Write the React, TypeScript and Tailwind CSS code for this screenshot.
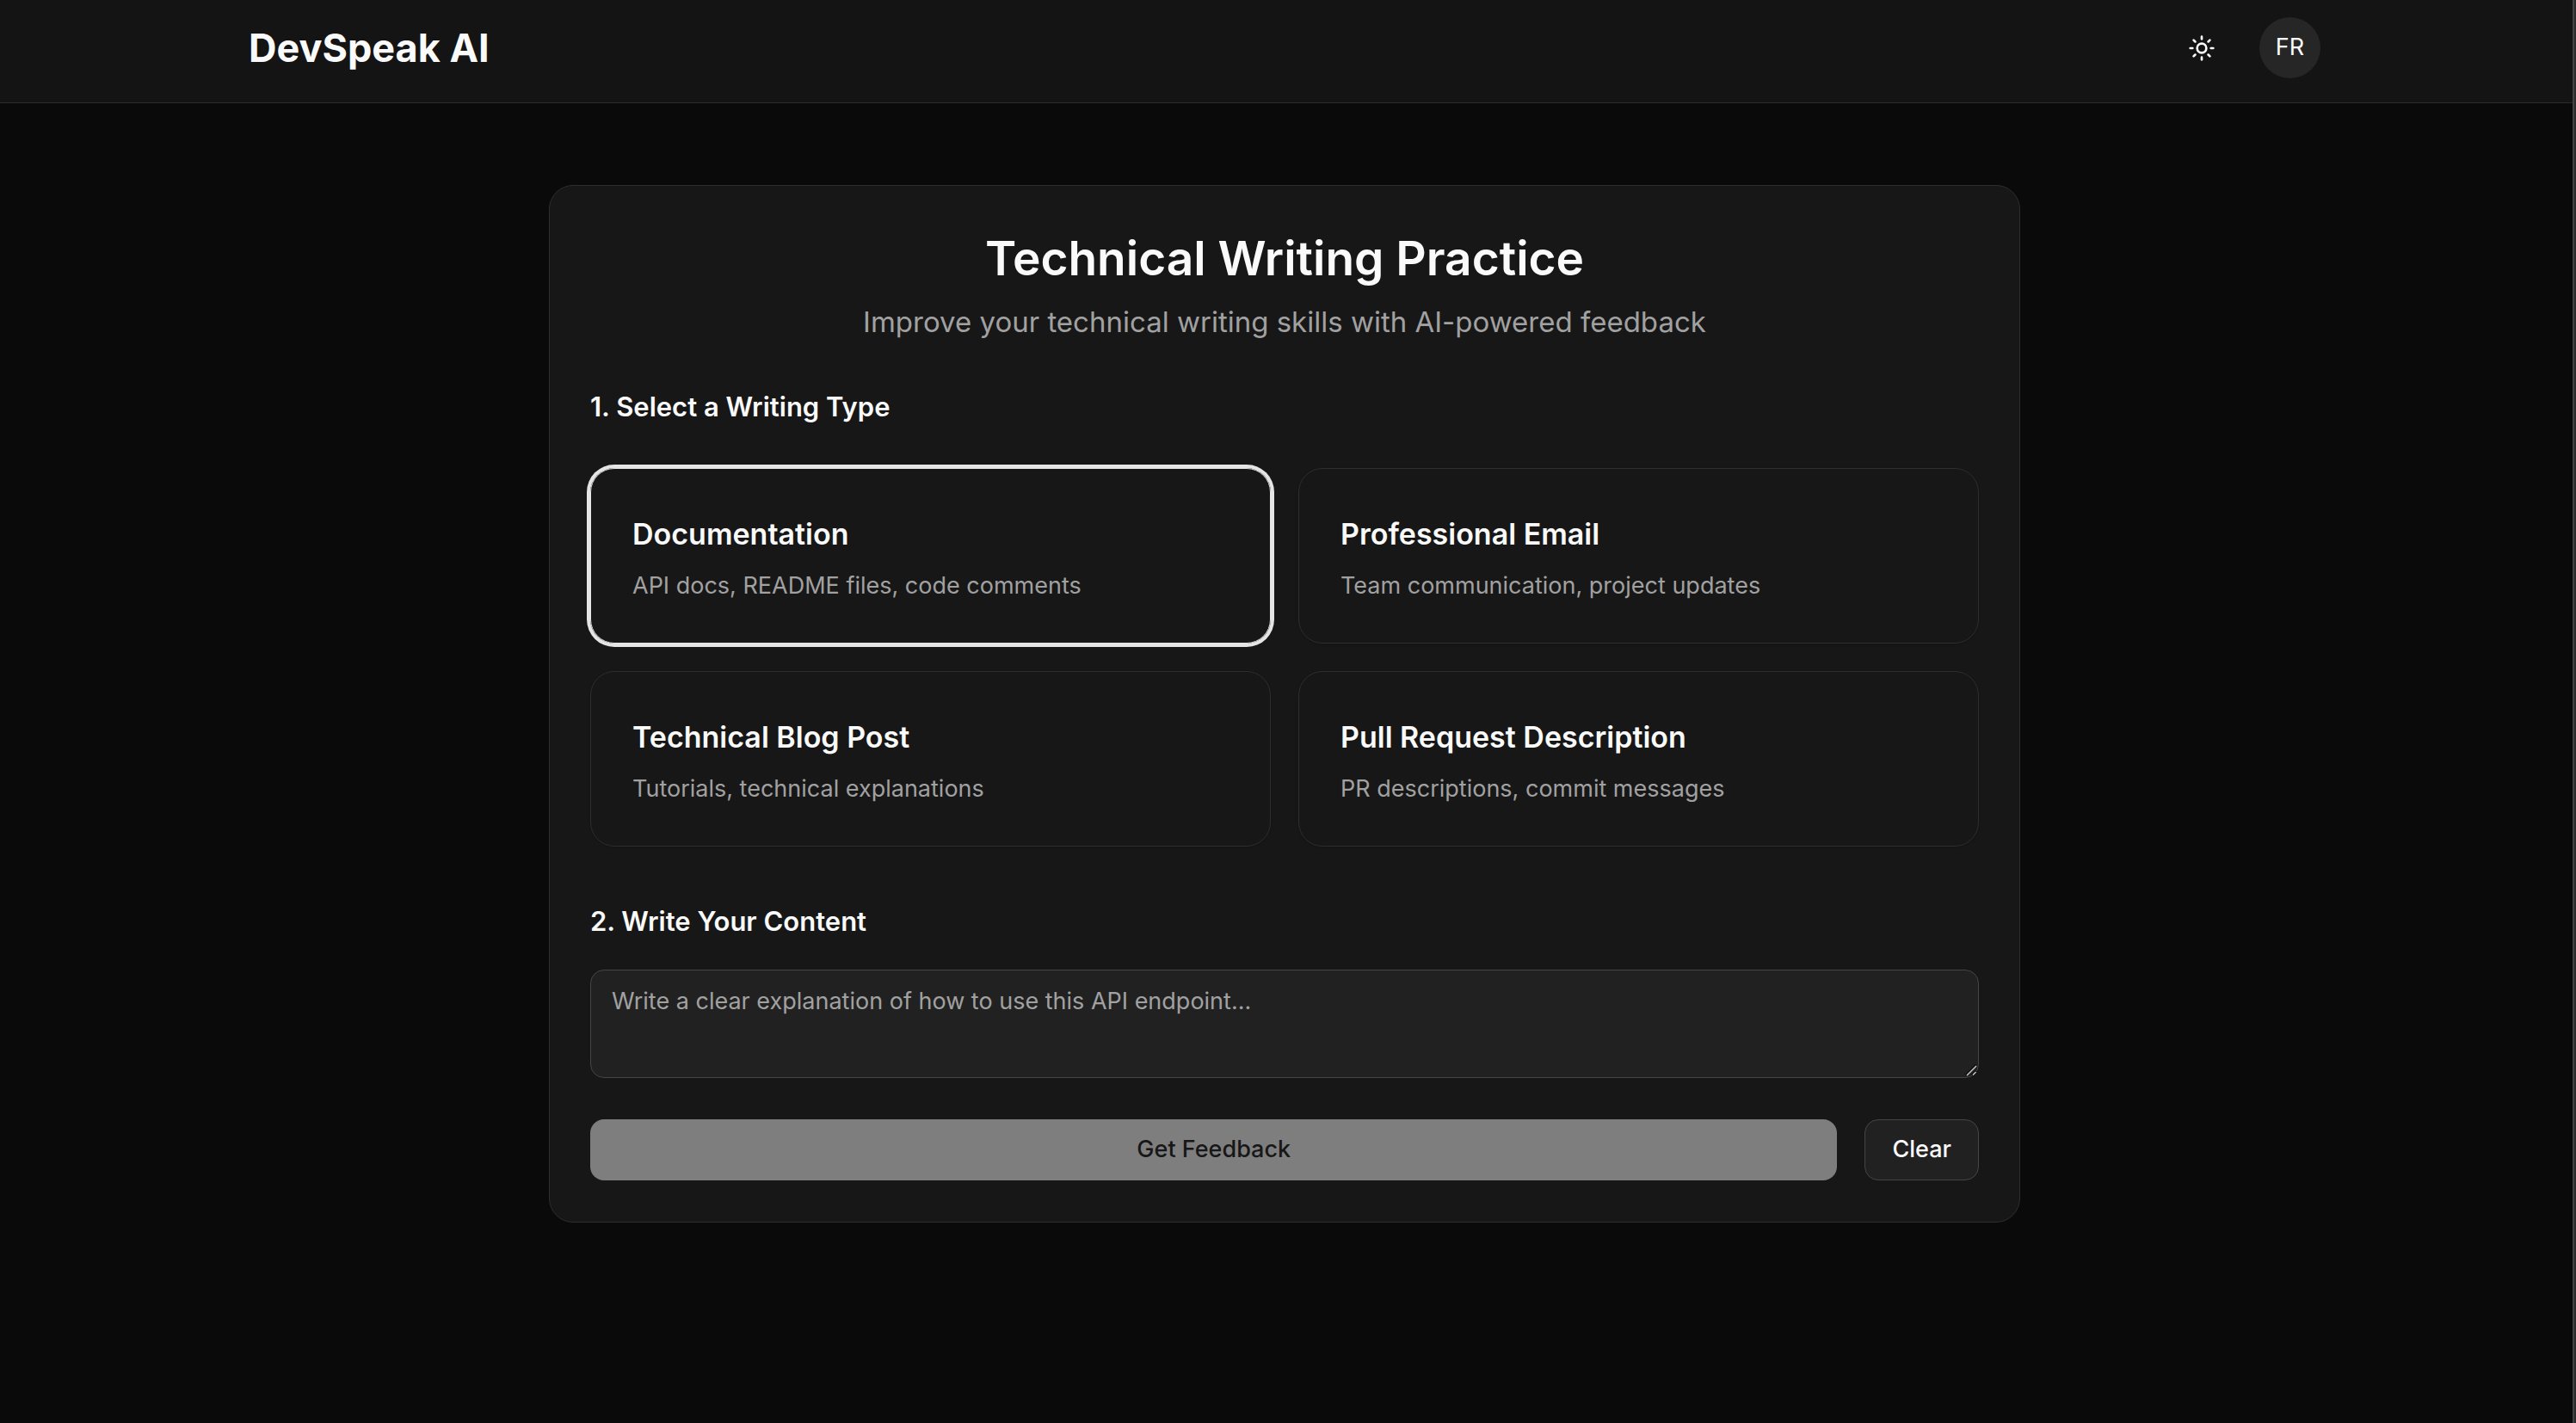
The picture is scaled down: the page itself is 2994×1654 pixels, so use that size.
import { useState } from 'react';
import { Sun } from 'lucide-react';

type WritingType = {
  id: string;
  title: string;
  description: string;
};

const writingTypes: WritingType[] = [
  { id: 'documentation', title: 'Documentation', description: 'API docs, README files, code comments' },
  { id: 'email', title: 'Professional Email', description: 'Team communication, project updates' },
  { id: 'blog', title: 'Technical Blog Post', description: 'Tutorials, technical explanations' },
  { id: 'pull-request', title: 'Pull Request Description', description: 'PR descriptions, commit messages' },
];

function Header() {
  return (
    <header className="border-b border-[#2b2b2b] bg-[#141414] pt-5 pr-1 pb-7">
      <div className="mx-auto flex w-full max-w-[2408px] items-center justify-between">
        <h1 className="text-[45px] leading-[60px] font-bold">DevSpeak AI</h1>
        <div className="flex items-center gap-8">
          <button type="button" aria-label="Toggle theme" className="flex size-[71px] items-center justify-center rounded-2xl">
            <Sun className="size-8" />
          </button>
          <button type="button" aria-label="Account" className="flex size-[71px] items-center justify-center rounded-full bg-[#262626] text-[27px]">
            FR
          </button>
        </div>
      </div>
    </header>
  );
}

function TypeCard({ type, selected, onSelect }: { type: WritingType; selected: boolean; onSelect: () => void }) {
  return (
    <button
      type="button"
      aria-pressed={selected}
      onClick={onSelect}
      className={`rounded-[28px] border px-12 pt-12 pb-[46px] text-left shadow-sm ${
        selected ? 'border-[#e5e5e5] ring-4 ring-[#e5e5e5]' : 'border-[#2e2e2e]'
      }`}
    >
      <span className="block text-[34px] leading-[56px] font-semibold">{type.title}</span>
      <span className="mt-3 block text-[27px] leading-10 text-[#a1a1a1]">{type.description}</span>
    </button>
  );
}

function ResizeGrip() {
  return (
    <svg viewBox="0 0 16 16" aria-hidden="true" className="pointer-events-none absolute right-0.5 bottom-0.5 size-4" fill="none">
      <path d="M2.5 14.5 14.5 2.5M9.5 14.5l5-5" stroke="#0a0a0a" strokeWidth="1.5" />
      <path d="M4 15 15 4M11 14.5l3.5-3.5" stroke="#c4c4c4" strokeWidth="1.5" />
    </svg>
  );
}

export default function App() {
  const [selected, setSelected] = useState('documentation');
  const [content, setContent] = useState('');

  return (
    <div className="flex min-h-screen bg-[#0a0a0a] font-['Inter',sans-serif] text-[#fafafa]">
      <div className="flex min-w-0 flex-1 flex-col">
        <Header />
        <main className="pt-[95px] pr-1 pb-24">
          <section className="mx-auto w-full max-w-[1710px] rounded-[28px] border border-[#2e2e2e] bg-[#171717] px-[47px] py-12">
            <div className="text-center">
              <h2 className="text-[55px] leading-[72px] font-semibold">Technical Writing Practice</h2>
              <p className="mt-2 text-[33px] leading-[60px] text-[#a1a1a1]">
                Improve your technical writing skills with AI-powered feedback
              </p>
            </div>

            <h3 className="mt-12 text-[31px] leading-[42px] font-semibold">1. Select a Writing Type</h3>
            <div className="mt-[50px] grid grid-cols-2 gap-8">
              {writingTypes.map((type) => (
                <TypeCard key={type.id} type={type} selected={type.id === selected} onSelect={() => setSelected(type.id)} />
              ))}
            </div>

            <label htmlFor="content" className="mt-[66px] block text-[31px] leading-[42px] font-semibold">
              2. Write Your Content
            </label>
            <div className="relative mt-[35px]">
              <textarea
                id="content"
                value={content}
                onChange={(event) => setContent(event.target.value)}
                placeholder="Write a clear explanation of how to use this API endpoint..."
                className="block h-[126px] w-full resize-none rounded-2xl border border-[#454545] bg-[#212121] px-6 py-4 text-[27px] leading-10 placeholder:text-[#a1a1a1]"
              />
              <ResizeGrip />
            </div>

            <div className="mt-12 flex gap-8">
              <button
                type="button"
                disabled={content === ''}
                className="h-[71px] flex-1 rounded-2xl bg-[#e5e5e5] text-[27px] font-medium text-[#171717] disabled:bg-[#7e7e7e]"
              >
                Get Feedback
              </button>
              <button
                type="button"
                onClick={() => setContent('')}
                className="h-[71px] rounded-2xl border border-[#454545] bg-[#212121] px-[31px] text-[27px] font-medium"
              >
                Clear
              </button>
            </div>
          </section>
        </main>
      </div>
      <div className="w-1 border-l-2 border-[#444444] bg-[#2c2c2c]" />
    </div>
  );
}
